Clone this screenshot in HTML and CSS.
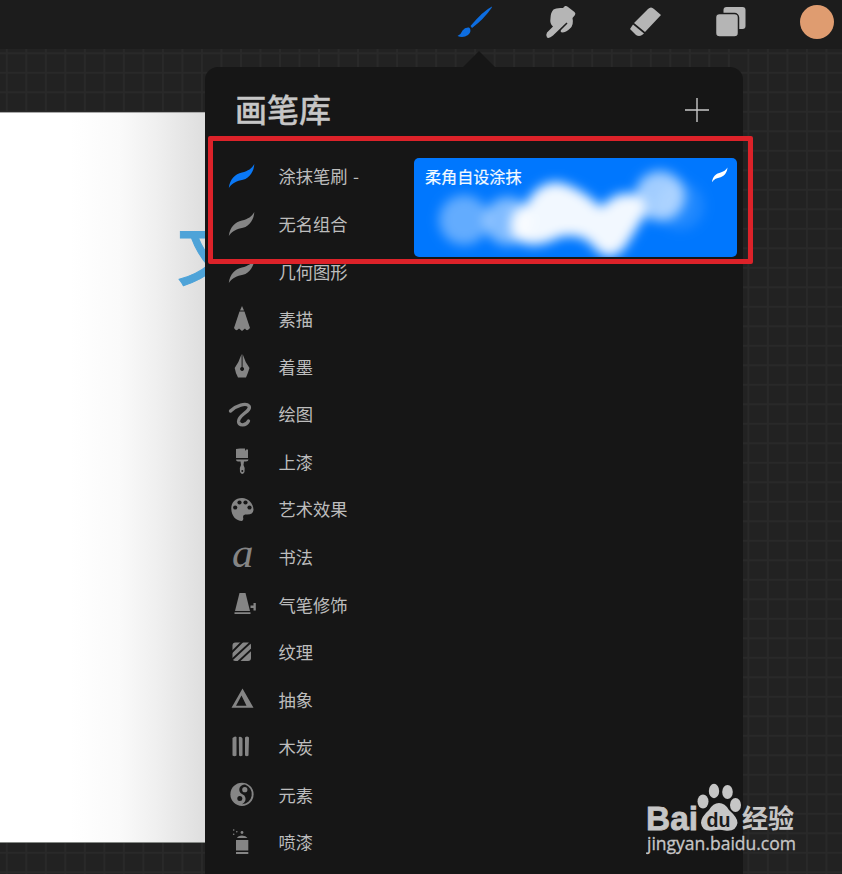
FILE: index.html
```html
<!DOCTYPE html>
<html lang="zh-CN">
<head>
<meta charset="utf-8">
<title>画笔库</title>
<link rel="stylesheet" href="styles.css">
</head>
<body>
<div class="app">
  <header class="toolbar">
    <svg class="tool active" viewBox="0 0 40 40"><path d="M37 4.5Q28 9 15.5 24L17 26Q29 17 36.500 6Q37 5 37 4.500Z"/><path d="M14 25.500Q10 25 7.500 28.500Q6 32.500 2.500 34Q8 36.500 13 33Q16.500 30 15 26.500Z"/></svg>
    <svg class="tool" viewBox="0 0 40 40"><path d="M12.500 7.500Q15 5.500 22 6L24 4Q25.500 3.500 27 5L33.500 10Q35 11.500 34 13L31.500 16Q33 23 29 26.500Q25 30.500 21 30.500Q18.500 29.500 20.500 27.500L26.500 21.500L25.500 20.500L12 33.500Q8 37 6 35.500Q4.500 33 6 30.500L12 24.500Q8.500 22 9.500 16Q9.500 10.500 12.500 7.500Z"/></svg>
    <svg class="tool" viewBox="0 0 40 40"><path d="M22 7Q25 4 28 7L35 13L19 30L8 21Z"/><path d="M7 22.500L18 31.500L16 33Q13 35 10 33L4 27Z"/></svg>
    <svg class="tool" viewBox="0 0 40 40"><rect x="12.500" y="5" width="22" height="22" rx="3"/><rect class="layer-front" x="4.500" y="11.500" width="23" height="23.500" rx="4"/></svg>
    <span class="swatch"></span>
  </header>
  <main class="workspace">
    <div class="paper"><span class="paper-text">文</span></div>
  </main>

  <section class="popover">
    <header class="popover-head">
      <h1>画笔库</h1>
      <svg class="plus" viewBox="0 0 26 26"><path d="M13 1V25M1 13H25"/></svg>
    </header>
    <div class="popover-body">
      <ul class="sets">
        <li class="selected"><svg viewBox="0 0 28 28"><path d="M.8 25C2 16 7 11 14 9.500C20 8 24 5.500 26.300 1C26 8 22 15 15 16.800C9 18 4 20 .8 25Z"/></svg>涂抹笔刷 -</li>
        <li><svg viewBox="0 0 28 28"><path d="M.8 25C2 16 7 11 14 9.500C20 8 24 5.500 26.300 1C26 8 22 15 15 16.800C9 18 4 20 .8 25Z"/></svg>无名组合</li>
        <li><svg viewBox="0 0 28 28"><path d="M.8 25C2 16 7 11 14 9.500C20 8 24 5.500 26.300 1C26 8 22 15 15 16.800C9 18 4 20 .8 25Z"/></svg>几何图形</li>
        <li><svg viewBox="0 0 28 28"><path d="M14 0L16 4.500H12ZM11.500 5.500H16.500L22 22Q19 26 17 22.500L14 25L11 22.500Q8 26 6 22Z"/></svg>素描</li>
        <li><svg viewBox="0 0 28 28"><path d="M13.600 1V14A2 2 0 1 0 14.600 14V1Q17 9 21.500 15Q20 20 18 24.500H10Q7.500 20 6.700 15Q11 9 13.600 1Z"/></svg>着墨</li>
        <li><svg viewBox="0 0 28 28"><path class="line" d="M2.500 10C8 4.500 18 1.500 21 5C24 10 10 14 10.500 20.500C11 25 18 25 20.500 20"/></svg>绘图</li>
        <li><svg viewBox="0 0 28 28"><path d="M8 1Q10 .5 12 .500H17V3L18 1.500H20V10H8ZM8 11.500H20.500Q20.500 13.500 18 13.500H16L15.500 17Q17.500 20 16.500 24Q14.300 28 12 24Q11 20 13 17L12.500 13.500H10Q8 13.500 8 11.500Z"/><circle class="hole" cx="14.300" cy="23" r="1"/></svg>上漆</li>
        <li><svg viewBox="0 0 28 28"><path d="M14 2C7 2 3 7 3.300 13C3.500 20 8 25 14 25Q16 24 15 21Q15 18 18 18.500Q25 19 25.500 14C25.500 7 20 2 14 2Z"/><g class="hole"><circle cx="7.200" cy="11.500" r="2.100"/><circle cx="11.500" cy="6.500" r="2.100"/><circle cx="17.500" cy="6.500" r="2.100"/><circle cx="21.500" cy="11.500" r="2.100"/></g></svg>艺术效果</li>
        <li><svg viewBox="0 0 28 28"><text class="script-a" x="4" y="23">a</text></svg>书法</li>
        <li><svg viewBox="0 0 28 28"><path d="M11.500 2H17.500L22 20H7ZM6.500 21.300H22.500V23H6.500ZM22.500 14.500H25.500V12H27.800V19.500H25.500V17H22.500Z"/></svg>气笔修饰</li>
        <li><svg viewBox="0 0 28 28"><rect x="4.500" y="3.500" width="18.500" height="18.500" rx="3"/><path class="cut" d="M3 14L15 2M3 21.500L23 3M10 23L24 10"/></svg>纹理</li>
        <li><svg viewBox="0 0 28 28"><path fill-rule="evenodd" d="M14.500 2.500L25.500 21.800H3.500ZM13.500 9.500L8 19.800H18.500Z"/></svg>抽象</li>
        <li><svg viewBox="0 0 28 28"><path d="M4.500 4Q7 1.500 8.500 3V21.500Q6.500 23 4.500 21.500ZM10.800 3Q13.500 2 14.500 4.500V21.500Q12.500 23 11 21.500ZM17 3.500Q19 1.500 21 3.500L20.500 21.500Q19 23 17 21.500Z"/></svg>木炭</li>
        <li><svg viewBox="0 0 28 28"><circle cx="14" cy="13.300" r="11.600"/><path class="hole" d="M17 3.500A10.200 10.200 0 0 1 14 23.300Q18 21 17.500 17Q17 14 14 13Q10.500 11 11.500 7Q13 3.500 17 3.500Z"/><circle cx="16.800" cy="8.700" r="2.600"/><circle class="hole" cx="11.800" cy="17.600" r="2.500"/></svg>元素</li>
        <li><svg viewBox="0 0 28 28"><path d="M8 11H20.300V21.500H8ZM8 23H20.300V25H8ZM9 9Q10 6.800 14 6.500Q18 6.800 19.500 9Z"/><circle cx="14" cy="3.500" r="1.400"/><circle cx="5.700" cy="1" r=".8"/><circle cx="8.800" cy="2.800" r=".8"/><circle cx="5.700" cy="5.300" r=".8"/></svg>喷漆</li>
      </ul>
      <article class="brush">
        <h2>柔角自设涂抹</h2>
        <svg class="brush-mark" viewBox="0 0 28 28"><path d="M.8 25C2 16 7 11 14 9.500C20 8 24 5.500 26.300 1C26 8 22 15 15 16.800C9 18 4 20 .8 25Z"/></svg>
        <svg class="stroke" viewBox="0 0 323 99">
          <defs><filter id="soft" x="-20%" y="-20%" width="140%" height="140%"><feGaussianBlur stdDeviation="6"/></filter></defs>
          <g filter="url(#soft)" fill="#fff">
            <circle cx="50" cy="62" r="25" opacity=".39"/>
            <circle cx="94" cy="63" r="24" opacity=".5"/>
            <path opacity=".95" d="M98 77Q92 52 112 47Q121 25 143 24Q165 28 187 49Q206 29 224 38Q235 45 229 60L212 88Q195 110 177 86Q166 75 146 79Q114 96 98 77Z"/>
            <circle cx="246" cy="38" r="25" opacity=".63"/>
            <circle cx="266" cy="48" r="24" opacity=".12"/>
          </g>
        </svg>
      </article>
    </div>
  </section>

  <div class="highlight"></div>

  <svg class="watermark" viewBox="0 0 156 76">
    <text class="wm-bai" x="0" y="50" textLength="52" lengthAdjust="spacingAndGlyphs">Bai</text>
    <ellipse cx="57" cy="21.500" rx="5.500" ry="7"/>
    <ellipse cx="68" cy="11" rx="5.200" ry="7.200"/>
    <ellipse cx="81.500" cy="12" rx="5.300" ry="7"/>
    <ellipse cx="89.500" cy="25" rx="5.500" ry="7"/>
    <path d="M73 23Q79 23 83 30Q92 38 91.500 43Q90 52 79 50.500Q73 49 67 50.500Q56 52 55 43Q55 37 63 30Q67 23 73 23Z"/>
    <text class="wm-du" x="60.500" y="46.500" textLength="24" lengthAdjust="spacingAndGlyphs">du</text>
    <text class="wm-cn" x="96" y="47.500" textLength="52">经验</text>
    <text class="wm-url" x="1" y="69.500" textLength="149" lengthAdjust="spacingAndGlyphs">jingyan.baidu.com</text>
  </svg>
</div>
</body>
</html>
```
FILE: styles.css
```css
* { box-sizing: border-box; }
body {
  margin: 0;
  font-family: "Noto Sans CJK SC", sans-serif;
  background: #222;
}
.app {
  position: relative;
  display: flex;
  flex-direction: column;
  width: 842px;
  height: 874px;
  overflow: hidden;
}
.toolbar {
  display: flex;
  flex: none;
  justify-content: flex-end;
  gap: 45.300px;
  height: 49px;
  padding: 2px 5.500px 0 0;
  background: #1c1c1c;
}
.tool { width: 40px; height: 40px; fill: #b5b5b5; }
.tool.active { fill: #0d6de0; }
.layer-front { stroke: #1c1c1c; stroke-width: 1.500; }
.swatch {
  width: 34px;
  height: 34px;
  margin: 3px;
  border-radius: 50%;
  background: #df9c70;
}
.workspace {
  flex: 1;
  padding-top: 63px;
  background-color: #222;
  background-image:
    linear-gradient(90deg, #292929 2px, transparent 2px),
    linear-gradient(#292929 2px, transparent 2px);
  background-size: 19.530px 19.510px;
  background-position: 5.800px 3.300px;
}
.paper {
  width: 205px;
  height: 731px;
  padding: 83px 0 0 177px;
  overflow: hidden;
  border-top: 1px solid #aaa;
  border-bottom: 1px solid #858985;
  background: linear-gradient(90deg, #fff 70px, #fafafa 120px, #f0f0f0 155px, #dedede 205px);
}
.paper-text {
  display: block;
  width: 72px;
  font-size: 71px;
  font-weight: 500;
  line-height: 104px;
  color: #4ea3d8;
  -webkit-text-stroke: 1px #4ea3d8;
}
.popover {
  position: absolute;
  top: 67px;
  left: 205px;
  width: 538px;
  height: 820px;
  border-radius: 13px;
  background: #161616;
}
.popover::before {
  content: "";
  position: absolute;
  top: -16px;
  left: 257px;
  border: 17px solid transparent;
  border-top: 0;
  border-bottom: 17px solid #161616;
}
.popover-head {
  display: flex;
  align-items: center;
  justify-content: space-between;
  height: 86.200px;
  padding: 0 33px 0 30px;
}
h1 {
  margin: 0 0 5px;
  font-size: 32px;
  font-weight: 500;
  line-height: 48px;
  color: #c6c6c6;
  -webkit-text-stroke: .3px #c6c6c6;
}
.plus { width: 26px; height: 26px; fill: none; stroke: #c8c8c8; stroke-width: 1.400; }
.popover-body { display: flex; padding-left: 22px; }
.sets {
  width: 187px;
  margin: 0;
  padding: 0;
  list-style: none;
}
.sets li {
  display: flex;
  align-items: center;
  gap: 23.500px;
  height: 47.590px;
  padding-bottom: 1.200px;
  font-size: 17.300px;
  line-height: 26px;
  color: #bdbdbd;
}
.sets svg { position: relative; top: .6px; left: .7px; flex: none; width: 28px; height: 28px; fill: #858585; overflow: visible; }
.sets .selected { word-spacing: 1.500px; }
.sets .selected svg { fill: #0a78f5; }
.sets .line { fill: none; stroke: #858585; stroke-width: 3.300; stroke-linecap: round; }
.sets .cut { fill: none; stroke: #161616; stroke-width: 1.800; }
.sets .hole { fill: #161616; }
.script-a { font: italic 43px "Liberation Serif", serif; }
.brush {
  position: relative;
  width: 323px;
  height: 99px;
  margin-top: 5.300px;
  padding: 6px 11px;
  overflow: hidden;
  border-radius: 5px;
  background: #0077fe;
}
h2 {
  position: relative;
  z-index: 1;
  margin: 0;
  font-size: 16.100px;
  font-weight: 400;
  line-height: 24px;
  color: #f4faff;
  -webkit-text-stroke: .2px #f4faff;
}
.brush-mark { position: absolute; z-index: 1; top: 9px; right: 8px; width: 18px; height: 17px; fill: #fff; }
.stroke { position: absolute; inset: 0; width: 323px; height: 99px; }
.highlight {
  position: absolute;
  top: 135.500px;
  left: 208px;
  width: 545px;
  height: 128.500px;
  border: 5px solid #dc2229;
  border-radius: 2px;
}
.watermark {
  position: absolute;
  top: 780px;
  left: 646px;
  width: 156px;
  height: 76px;
  fill: #c6c6c6;
}
.wm-bai { font: bold 34px "Liberation Sans", sans-serif; stroke: #c6c6c6; stroke-width: .8px; }
.wm-du { font: bold 21px "Liberation Sans", sans-serif; fill: #1a1a1a; }
.wm-cn { font: bold 26px "Noto Sans CJK SC", sans-serif; }
.wm-url { font: 17.500px "Open Sans", sans-serif; stroke: #c6c6c6; stroke-width: .3px; }
```
